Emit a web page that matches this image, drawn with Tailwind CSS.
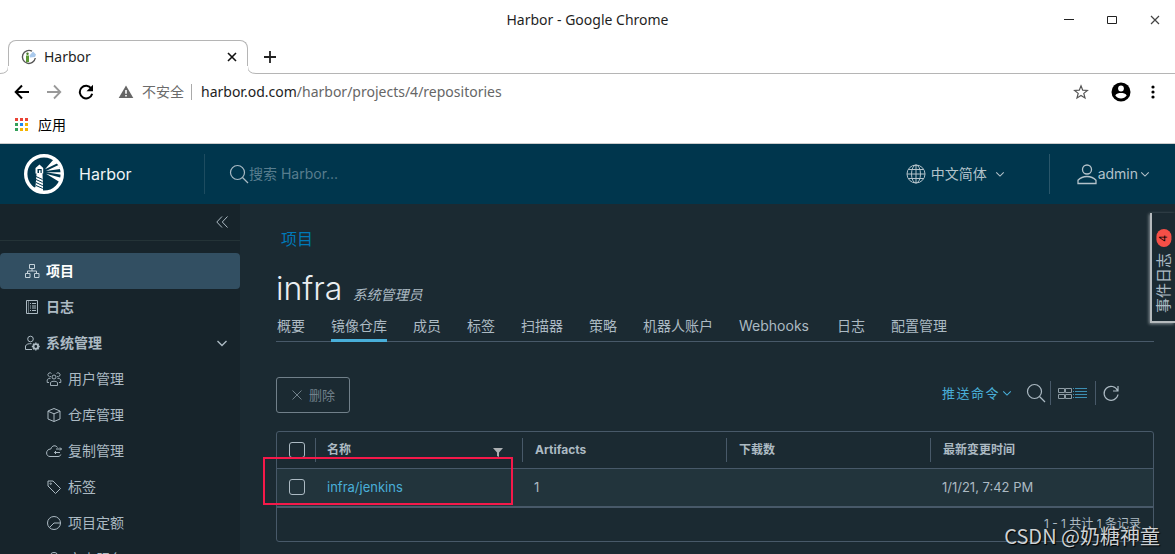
<!DOCTYPE html>
<html lang="zh-CN">
<head>
<meta charset="utf-8">
<title>Harbor</title>
<script src="https://cdn.jsdelivr.net/npm/@tailwindcss/browser@4"></script>
</head>
<body class="h-screen overflow-hidden flex flex-col bg-white font-['Noto_Sans','Noto_Sans_CJK_SC',sans-serif] text-sm">

<!-- Browser window -->
<div class="shrink-0 text-[#1f1f1f]">
  <div class="relative h-10 flex items-center justify-end pr-3">
    <div class="absolute inset-0 flex items-center justify-center pointer-events-none">Harbor - Google Chrome</div>
    <div class="relative flex gap-[27px]">
      <button aria-label="最小化"><svg class="size-4" viewBox="0 0 16 16" fill="none" stroke="#222"><path d="M3 7.5h10"/></svg></button>
      <button aria-label="最大化"><svg class="size-4" viewBox="0 0 16 16" fill="none" stroke="#222"><path d="M3.500 4.500h9v7h-9z"/></svg></button>
      <button aria-label="关闭"><svg class="size-4" viewBox="0 0 16 16" fill="none" stroke="#444" stroke-width="1.200"><path d="M4 4l8 8M12 4l-8 8"/></svg></button>
    </div>
  </div>
  <div class="flex h-[34px]">
    <svg class="w-2 h-[34px] shrink-0" viewBox="0 0 8 34" fill="none" stroke="#b5b5b5"><path d="M0 33.500Q8.500 33.500 8.500 26"/></svg>
    <div class="w-[240px] flex items-center border border-b-0 border-[#b5b5b5] rounded-t-lg pl-3 pr-[9px] mb-2 pt-1.5">
      <div class="flex items-center flex-1 gap-[7px]">
        <svg class="size-4" viewBox="0 0 16 16" fill="none"><path d="M11 2.200A6.500 6.500 0 1 0 14.300 9" stroke="#555" stroke-width="1.400"/><path d="M5 6.500h3V13l-3 .3z" fill="#5c9a35"/><path d="M8.500 6.500L12 2.500l3 3-1 2.500-5 .5z" fill="#a9c9ec"/><circle cx="6.500" cy="4.800" r="1.200" fill="#4a7b2c"/></svg>
        <span>Harbor</span>
      </div>
      <button aria-label="关闭标签页"><svg class="size-3" viewBox="0 0 12 12" fill="none" stroke="#111" stroke-width="1.600"><path d="M2 2l8 8M10 2l-8 8"/></svg></button>
    </div>
    <svg class="w-2 h-[34px] shrink-0" viewBox="0 0 8 34" fill="none" stroke="#b5b5b5"><path d="M-.5 26Q-.5 33.500 8 33.500"/></svg>
    <div class="flex-1 border-b border-[#b5b5b5] flex items-center pl-[7px]">
      <button aria-label="新标签页"><svg class="size-[14px]" viewBox="0 0 14 14" stroke="#222" stroke-width="1.800"><path d="M7 1v12M1 7h12"/></svg></button>
    </div>
  </div>
  <div class="h-9 flex items-center pl-3.5 pr-3.5">
    <button aria-label="后退"><svg class="size-4" viewBox="0 0 16 16" fill="none" stroke="#000" stroke-width="2"><path d="M15 8H2M8 1.500L1.700 8 8 14.500"/></svg></button>
    <button class="ml-4" aria-label="前进"><svg class="size-4" viewBox="0 0 16 16" fill="none" stroke="#999" stroke-width="1.800"><path d="M1 8h13M8 1.500L14.300 8 8 14.500"/></svg></button>
    <button class="ml-4" aria-label="重新加载"><svg class="size-4" viewBox="0 0 16 16"><path d="M13.300 4.500A6.300 6.300 0 1 0 14.200 9.800" fill="none" stroke="#000" stroke-width="2"/><path d="M15 .7v6.500H8.500z"/></svg></button>
    <svg class="size-4 ml-6" viewBox="0 0 16 16"><path d="M8 1.500L15.300 14H.7z" fill="#666"/><path d="M8 6v3.800M8 11v1.600" stroke="#fff" stroke-width="1.600"/></svg>
    <span class="ml-2 text-[#6b6b6b]">不安全</span>
    <span class="ml-[7px] mr-[9px] w-px h-4 bg-[#aaa]"></span>
    <span class="flex-1 text-[#666]"><span class="text-[#222]">harbor.od.com</span>/harbor/projects/4/repositories</span>
    <button aria-label="收藏"><svg class="size-4" viewBox="0 0 16 16" fill="none" stroke="#555" stroke-width="1.200"><path d="M8 1.800l1.700 4.300 4.700.3-3.600 3 1.200 4.500L8 11.400l-4 2.500 1.200-4.500-3.600-3 4.700-.3z"/></svg></button>
    <button class="ml-[22px]" aria-label="用户"><svg class="size-5" viewBox="0 0 20 20"><circle cx="10" cy="10" r="9.500"/><circle cx="10" cy="6.500" r="2.900" fill="#fff"/><path d="M4.300 13.500C5 11.500 8 11 10 11s5 .5 5.700 2.500C14.300 15.500 12.300 16.500 10 16.500S5.700 15.500 4.300 13.500z" fill="#fff"/></svg></button>
    <button class="ml-[14px]" aria-label="菜单"><svg class="size-4" viewBox="0 0 16 16"><circle cx="8" cy="3" r="1.600"/><circle cx="8" cy="8" r="1.600"/><circle cx="8" cy="13" r="1.600"/></svg></button>
  </div>
  <div class="h-[34px] flex items-center border-b border-[#ccc] pl-[15px] pb-1">
    <button class="flex items-center gap-2.5 text-black"><svg class="size-[13px]" viewBox="0 0 13 13"><path d="M0 0h3v3H0zM5 0h3v3H5zM10 0h3v3h-3z" fill="#ea4335"/><path d="M0 5h3v3H0zM0 10h3v3H0z" fill="#34a05a"/><path d="M5 5h3v3H5z" fill="#1e88f0"/><path d="M10 5h3v3h-3zM5 10h3v3H5zM10 10h3v3h-3z" fill="#f5b400"/></svg>应用</button>
  </div>
</div>

<!-- Shared outline icons -->
<svg class="hidden">
  <symbol id="chev" viewBox="0 0 12 12"><path d="M1.500 4L6 8.500 10.500 4"/></symbol>
  <symbol id="lens" viewBox="0 0 20 20"><circle cx="8.500" cy="8.500" r="7"/><path d="M13.500 13.500L19 19"/></symbol>
</svg>

<!-- Harbor header -->
<header class="h-[60px] shrink-0 bg-[#00364d] flex items-center text-[#b3c2ca] font-['Inter','Noto_Sans_CJK_SC',sans-serif]">
  <a href="#" class="flex items-center pl-6 w-[204px] gap-[15px] text-[#f0f4f6] text-base">
    <svg class="size-10" viewBox="0 0 40 40"><circle cx="20" cy="20" r="18.300" fill="none" stroke="#fff" stroke-width="3.400"/><path d="M15.500 10.500L11.500 14v5.500h1L11.500 33l-2 1 1.500 3 8 2v-5.500l-.5-14h.7V14zM13.500 15h4.200v4h-4.200z" fill="#fff" fill-rule="evenodd"/><path d="M15 16.200h1.500V19H15z" fill="#fff"/><path d="M12 22.500l6.500 3M12 25.500l6.500 3M12 28.500l6.800 3.200M12 31.500l6.800 3" stroke="#00364d" stroke-width="1"/><path d="M21 15.300l8.500-9.800 4 3.800zM22 17l12.500-6 1.700 4zM22 18.300h15.500v2.400zM22 19.700l15 4-1.500 4.300z" fill="#fff"/></svg>
    <span>Harbor</span>
  </a>
  <label class="flex-1 h-10 border-l border-[#1d4c60] flex items-center pl-6">
    <svg class="size-5 fill-none stroke-[#a9bac4]" stroke-width="1.200"><use href="#lens"/></svg>
    <input type="text" aria-label="搜索" placeholder="搜索 Harbor..." class="w-48 bg-transparent outline-none text-sm placeholder:text-[#587d8e]">
  </label>
  <button class="flex items-center h-10 pr-[44px]">
    <svg class="size-5 fill-none stroke-[#b3c2ca]" viewBox="0 0 20 20"><circle cx="10" cy="10" r="9"/><ellipse cx="10" cy="10" rx="4.500" ry="9"/><path d="M10 1v18M1 10h18M2.500 5.500h15M2.500 14.500h15"/></svg>
    <span class="ml-[5px]">中文简体</span>
    <svg class="size-2.5 ml-2 fill-none stroke-[#b3c2ca]" stroke-width="1.300"><use href="#chev"/></svg>
  </button>
  <button class="flex items-center h-10 border-l border-[#29566a] pl-[26px] pr-[25px]">
    <svg class="size-[22px] fill-none stroke-[#b3c2ca]" viewBox="0 0 22 22" stroke-width="1.300"><circle cx="11" cy="6.500" r="4.500"/><path d="M2 20.500v-3.200C4.500 14.500 7.500 13.500 11 13.500s6.500 1 9 3.800v3.200z"/></svg>
    <span>admin</span>
    <svg class="size-2.5 ml-0.5 fill-none stroke-[#b3c2ca]" stroke-width="1.300"><use href="#chev"/></svg>
  </button>
</header>

<div class="relative flex-1 min-h-0 flex font-['Inter','Noto_Sans_CJK_SC',sans-serif] text-[#acbac3]">
  <!-- Sidebar -->
  <nav class="w-60 shrink-0 bg-[#17242b] overflow-hidden">
    <div class="h-[37px] border-b border-[#243337] flex items-center justify-end pr-3">
      <button aria-label="收起"><svg class="size-3" viewBox="0 0 12 12" fill="none" stroke="#acbac3"><path d="M6 .5L.8 6 6 11.500M11.500 .5L6.300 6l5.200 5.500"/></svg></button>
    </div>
    <div class="mt-3 flex flex-col">
      <a href="#" class="h-9 flex items-center gap-1.5 pl-6 rounded bg-[#324f62] text-white font-bold"><svg class="size-4" viewBox="0 0 16 16" fill="none" stroke="#c5d2da"><path d="M5.500 1.500h5v4h-5zM1.500 10.500h4.500v4H1.500zM10.500 10.500H15v4h-4.500zM8 5.500V8M3.500 10V8h9v2"/></svg>项目</a>
      <a href="#" class="h-9 flex items-center gap-1.5 pl-6 font-bold"><svg class="size-4" viewBox="0 0 16 16" fill="none" stroke="#acbac3"><path d="M2.500 1.500h11v13h-11z"/><path d="M4.500 2v12" stroke-opacity=".5"/><path d="M6 4.500h1M8 4.500h4M6 7h1M8 7h4M6 9h1M8 9h4M6 11.500h1M8 11.500h4"/></svg>日志</a>
      <button class="h-9 flex items-center gap-1.5 pl-6 pr-3 font-bold text-left"><svg class="size-4" viewBox="0 0 16 16" fill="none" stroke="#acbac3"><circle cx="6.500" cy="4" r="2.800"/><path d="M8 14.500H1.500V11C2.500 9 4.500 8.500 7.500 8.700"/><circle cx="11.800" cy="11.500" r="2.300" stroke-width="1.800"/><path d="M11.800 7.500v1.300M11.800 14.200v1.300M7.800 11.500h1.300M14.500 11.500h1.300M9 8.700l1 1M13.600 13.300l1 1M9 14.300l1-1M13.600 9.700l1-1" stroke-width="1.400"/></svg><span class="flex-1">系统管理</span><svg class="size-3 fill-none stroke-[#acbac3]" stroke-width="1.400"><use href="#chev"/></svg></button>
      <a href="#" class="h-9 flex items-center gap-1.5 pl-[46px]"><svg class="size-4" viewBox="0 0 16 16" fill="none" stroke="#acbac3" stroke-width=".9"><circle cx="8" cy="6" r="2"/><path d="M4.500 14.500v-3C5.500 9.800 10.500 9.800 11.500 11.500v3zM5 5.500A2 2 0 1 1 5.500 2.500M11 5.500a2 2 0 1 0-.5-3M4.500 7.500C2.500 7.300 1.500 8 1.200 9v2.500H3M11.500 7.500c2-.2 3 .5 3.300 1.500v2.500H13"/></svg>用户管理</a>
      <a href="#" class="h-9 flex items-center gap-1.5 pl-[46px]"><svg class="size-4" viewBox="0 0 16 16" fill="none" stroke="#acbac3"><path d="M8 1.500l6 2.500v8l-6 2.500L2 12V4zM2 4.300l6 2.500 6-2.500M8 7v7.500"/></svg>仓库管理</a>
      <a href="#" class="h-9 flex items-center gap-1.5 pl-[46px]"><svg class="size-4" viewBox="0 0 16 16" fill="none" stroke="#acbac3"><path d="M11.500 4.500C10 2 6 2 4.800 6 2 6 .6 8 .6 10c0 2 1.400 3.500 3.400 3.500h8c1.500 0 2.500-.8 2.800-2M10 6h5.500M14 4.500L15.500 6 14 7.500M14 9.500H8.500M10 8L8.500 9.500 10 11"/></svg>复制管理</a>
      <a href="#" class="h-9 flex items-center gap-1.5 pl-[46px]"><svg class="size-4" viewBox="0 0 16 16" fill="none" stroke="#acbac3"><path d="M2 2h5l7.500 7.500-5 5L2 7z"/><circle cx="4.700" cy="4.700" r=".7"/></svg>标签</a>
      <a href="#" class="h-9 flex items-center gap-1.5 pl-[46px]"><svg class="size-4" viewBox="0 0 16 16" fill="none" stroke="#acbac3"><circle cx="8" cy="8" r="6.500"/><path d="M3.500 12.500L8 8h6.500"/></svg>项目定额</a>
      <a href="#" class="h-9 flex items-center gap-1.5 pl-[46px]"><svg class="size-4" viewBox="0 0 16 16" fill="none" stroke="#acbac3"><path d="M8 1.500c3 0 4 2 4 4.500v4l2 3H2l2-3V6c0-2.500 1-4.500 4-4.500z"/></svg>审查服务</a>
    </div>
  </nav>

  <!-- Content -->
  <main class="flex-1 min-w-0 bg-[#1b2a32] overflow-hidden pl-9 pr-[21px] pt-[21px]">
    <a href="#" class="block h-7 leading-7 pl-[5px] text-base text-[#0079b8]">项目</a>
    <div class="mt-4 h-10 flex items-baseline gap-2.5">
      <h1 class="text-[32px] leading-10 font-light text-[#eaeef1]">infra</h1>
      <em class="text-sm">系统管理员</em>
    </div>
    <div class="mt-[3px] h-[30px] flex gap-[26px] pl-px border-b border-[#485969]">
      <button class="pb-0.5">概要</button>
      <button class="-mb-px border-b-3 border-[#49afd9]">镜像仓库</button>
      <button class="pb-0.5">成员</button>
      <button class="pb-0.5">标签</button>
      <button class="pb-0.5">扫描器</button>
      <button class="pb-0.5">策略</button>
      <button class="pb-0.5">机器人账户</button>
      <button class="pb-0.5 pr-0.5">Webhooks</button>
      <button class="pb-0.5">日志</button>
      <button class="pb-0.5">配置管理</button>
    </div>

    <div class="mt-[35px] h-9 flex items-center">
      <button class="h-9 w-[74px] flex items-center justify-center gap-1.5 border border-[#71808a] rounded-[3px] text-[#71808a] text-[13px]"><svg class="size-3" viewBox="0 0 12 12" fill="none" stroke="#71808a"><path d="M1.500 1.500l9 9M10.500 1.500l-9 9"/></svg>删除</button>
      <div class="ml-auto pr-[34px] pb-1 flex items-center">
        <button class="flex items-center gap-0.5 text-[#49afd9] text-[13px] tracking-[1.5px]">推送命令<svg class="size-2.5 fill-none stroke-[#49afd9]" stroke-width="1.300"><use href="#chev"/></svg></button>
        <button class="ml-3.5" aria-label="搜索"><svg class="size-5 fill-none stroke-[#acbac3]" stroke-width="1.200"><use href="#lens"/></svg></button>
        <span class="ml-1 w-px h-6 bg-[#485969]"></span>
        <button class="ml-1.5" aria-label="卡片视图"><svg class="w-4 h-4" viewBox="0 0 16 16" fill="none" stroke="#8e9ca5"><path d="M1.500 3.500h6v4h-6zM8.500 3.500h6v4h-6zM1.500 9.500h6v4h-6zM8.500 9.500h6v4h-6z"/></svg></button>
        <button aria-label="列表视图"><svg class="w-4 h-4" viewBox="0 0 16 16" fill="none" stroke="#3d8fb3"><path d="M0 3.500h1M2 3.500h12M0 6.500h1M2 6.500h12M0 9.500h1M2 9.500h12M0 12.500h1M2 12.500h12"/></svg></button>
        <span class="ml-1.5 w-px h-6 bg-[#485969]"></span>
        <button class="ml-1.5" aria-label="刷新"><svg class="size-[18px]" viewBox="0 0 18 18" fill="none" stroke="#acbac3" stroke-width="1.200"><path d="M15.500 6.500A7 7 0 1 0 16 10.500M16 2v5h-5"/></svg></button>
      </div>
    </div>

    <div class="relative mt-[18px] border border-[#485969] rounded-[3px] text-[13px]">
      <table class="w-full table-fixed border-collapse text-left">
        <colgroup><col class="w-[38px]"><col class="w-[207px]"><col class="w-[204px]"><col class="w-[204px]"><col></colgroup>
        <thead class="text-xs font-bold">
          <tr class="h-9">
            <th class="pl-3"><input type="checkbox" aria-label="全选" class="block appearance-none size-4 border border-[#acbac3] rounded-[3px]"></th>
            <th><div class="h-6 flex items-center justify-between border-l border-[#485969] pl-[11px] pr-[19px]">名称<button aria-label="筛选" class="mt-1"><svg class="size-2.5" viewBox="0 0 10 10" fill="#acb0b3"><path d="M0 1h10L6 5.500V10L4 9V5.500z"/></svg></button></div></th>
            <th><div class="h-6 flex items-center border-l border-[#485969] pl-3">Artifacts</div></th>
            <th><div class="h-6 flex items-center border-l border-[#485969] pl-3">下载数</div></th>
            <th><div class="h-6 flex items-center border-l border-[#485969] pl-3">最新变更时间</div></th>
          </tr>
        </thead>
        <tbody>
          <tr class="h-[38px] bg-[#22343c] border-t border-[#485969]">
            <td class="pl-3"><input type="checkbox" aria-label="选择 infra/jenkins" class="block appearance-none size-4 border border-[#acbac3] rounded-[3px]"></td>
            <td class="pl-3"><a href="#" class="text-[#49afd9]">infra/jenkins</a></td>
            <td class="pl-3">1</td>
            <td></td>
            <td class="pl-3">1/1/21, 7:42 PM</td>
          </tr>
        </tbody>
      </table>
      <div class="h-[35px] border-t-2 border-[#485969] flex items-center justify-end pr-3 pb-0.5 text-xs">1 - 1 共计 1 条记录</div>
      <div class="absolute -left-3.5 top-[25px] w-[250px] h-12 border-2 border-[#f5194a]"></div>
    </div>
  </main>

  <!-- Event log drawer handle -->
  <button class="absolute right-0 top-[9px] w-[25px] h-[110px] flex items-end justify-center pb-2 border-l-2 border-b-2 border-[#b5babd] shadow-[-1px_1px_3px_#8a9398] bg-[#1b2a32]">
    <span class="flex items-center gap-1.5 [writing-mode:vertical-rl] [text-orientation:sideways] rotate-180 text-[15px]">事件日志<span class="w-[15px] h-[18px] flex items-center justify-center rounded-full bg-[#f54f47] text-black text-[11px]">4</span></span>
  </button>
  <div class="absolute right-[15px] bottom-0.5 text-xl leading-8 font-['Noto_Sans_CJK_SC',sans-serif] text-[#cdd1d4] [text-shadow:1px_1px_1px_#000]">CSDN @奶糖神童</div>
</div>
</body>
</html>
